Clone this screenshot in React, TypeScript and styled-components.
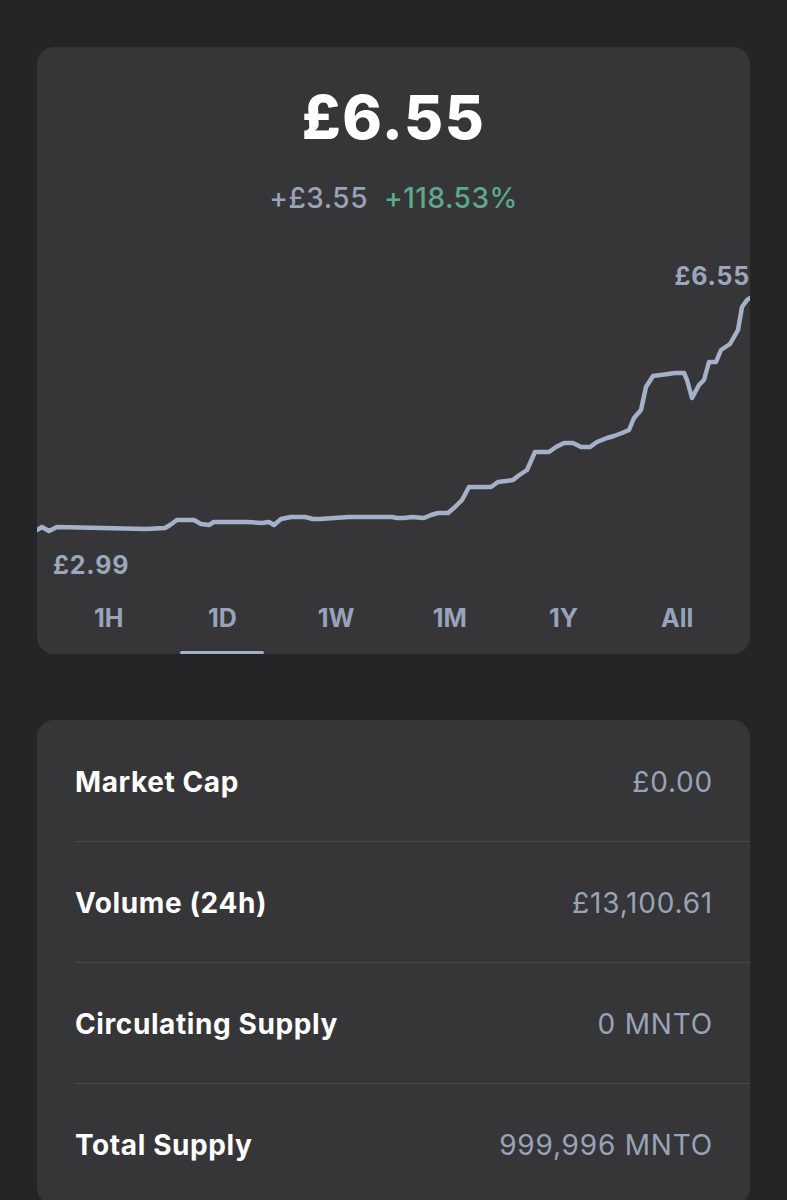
import React from "react";
import styled, { createGlobalStyle } from "styled-components";

const Global = createGlobalStyle`
  html, body { margin: 0; padding: 0; background: #252527; }
  body { font-family: Inter, "Noto Sans", "Liberation Sans", sans-serif; -webkit-font-smoothing: antialiased; }
  * { box-sizing: border-box; }
`;

const Page = styled.div`
  display: flex;
  flex-direction: column;
  gap: 66px;
  padding: 47px 37px 0;
  min-height: 1200px;
  background: #252527;
`;

const Card = styled.section`
  background: #363638;
  border-radius: 17px;
  overflow: hidden;
  display: flex;
  flex-direction: column;
`;

const PriceCard = styled(Card)`
  padding-top: 38px;
`;

const Price = styled.div`
  text-align: center;
  color: #ffffff;
  font-size: 60px;
  line-height: 64px;
  font-weight: 800;
  letter-spacing: 1.5px;
`;

const ChangeRow = styled.div`
  margin-top: 33px;
  display: flex;
  justify-content: center;
  gap: 16px;
  font-size: 28px;
  line-height: 32px;
  font-weight: 500;
  letter-spacing: 0.5px;
`;

const Change = styled.span<{ $tone: "muted" | "up" }>`
  color: ${(p) => (p.$tone === "up" ? "#5caa8c" : "#97a3bb")};
`;

const ChartLabel = styled.div<{ $align: "left" | "right" }>`
  color: #9ca7bd;
  font-size: 25px;
  line-height: 28px;
  font-weight: 700;
  letter-spacing: 0.8px;
  text-align: ${(p) => p.$align};
  padding: ${(p) => (p.$align === "right" ? "0 0 0 0" : "0 0 0 16px")};
`;

const HighLabel = styled(ChartLabel)`
  margin-top: 48px;
`;

const LowLabel = styled(ChartLabel)`
  margin-top: 11px;
`;

const ChartSvg = styled.svg`
  display: block;
  width: 713px;
  height: 250px;
`;

const Tabs = styled.div`
  display: grid;
  grid-template-columns: repeat(6, 1fr);
  padding: 0 16px 0 15px;
`;

const Tab = styled.div<{ $active?: boolean }>`
  position: relative;
  display: flex;
  justify-content: center;
  padding: 25px 0 22px;
  color: #97a3bb;
  font-size: 25px;
  line-height: 28px;
  font-weight: 700;
  &::after {
    content: "";
    position: absolute;
    left: 50%;
    bottom: 0;
    width: 84px;
    height: 3px;
    margin-left: -42px;
    border-radius: 2px;
    background: ${(p) => (p.$active ? "#a3b0c7" : "transparent")};
  }
`;

const StatsCard = styled(Card)`
  padding-top: 1px;
`;

const StatRow = styled.div`
  margin-left: 38px;
  padding-right: 37px;
  height: 121px;
  padding-top: 2px;
  display: flex;
  align-items: center;
  justify-content: space-between;
  border-bottom: 1px solid #4a4a4d;
`;

const StatLabel = styled.span`
  color: #ffffff;
  font-size: 28px;
  font-weight: 700;
  line-height: 34px;
  letter-spacing: 0.6px;
`;

const StatValue = styled.span`
  color: #98a3b9;
  font-size: 28px;
  font-weight: 400;
  line-height: 34px;
  letter-spacing: 0.8px;
`;

const raw: [number, number][] = [
  [37, 530], [42, 527], [49, 531], [57, 527], [102, 528], [146, 529], [165, 528],
  [170, 525], [177, 520], [194, 520], [201, 524], [209, 525], [214, 522], [247, 522],
  [262, 523], [269, 522], [274, 525], [281, 519], [291, 517], [305, 517], [313, 519],
  [320, 519], [349, 517], [392, 517], [397, 518], [404, 518], [412, 517], [424, 518],
  [431, 515], [438, 513], [448, 513], [455, 507], [462, 500], [469, 487], [491, 487],
  [498, 482], [513, 480], [518, 476], [527, 470], [535, 452], [549, 452], [556, 447],
  [564, 443], [573, 443], [581, 447], [590, 447], [597, 442], [607, 438], [614, 436],
  [622, 433], [629, 430], [634, 418], [641, 410], [646, 387], [653, 376], [668, 374],
  [675, 373], [684, 373], [687, 380], [692, 398], [699, 385], [704, 380], [709, 362],
  [716, 362], [721, 350], [730, 344], [738, 330], [742, 307], [747, 300], [750, 298],
];

const linePath = raw
  .map(([x, y], i) => `${i === 0 ? "M" : "L"}${x - 37} ${y - 290}`)
  .join(" ");

const stats = [
  { label: "Market Cap", value: "£0.00" },
  { label: "Volume (24h)", value: "£13,100.61" },
  { label: "Circulating Supply", value: "0 MNTO" },
  { label: "Total Supply", value: "999,996 MNTO" },
];

const ranges = ["1H", "1D", "1W", "1M", "1Y", "All"];

export default function App() {
  return (
    <>
      <Global />
      <Page>
        <PriceCard>
          <Price>£6.55</Price>
          <ChangeRow>
            <Change $tone="muted">+£3.55</Change>
            <Change $tone="up">+118.53%</Change>
          </ChangeRow>
          <HighLabel $align="right">£6.55</HighLabel>
          <ChartSvg viewBox="0 0 713 250">
            <path
              d={linePath}
              fill="none"
              stroke="#a4b1c8"
              strokeWidth={4.5}
              strokeLinejoin="round"
              strokeLinecap="round"
            />
          </ChartSvg>
          <LowLabel $align="left">£2.99</LowLabel>
          <Tabs>
            {ranges.map((r) => (
              <Tab key={r} $active={r === "1D"}>
                {r}
              </Tab>
            ))}
          </Tabs>
        </PriceCard>
        <StatsCard>
          {stats.map((s) => (
            <StatRow key={s.label}>
              <StatLabel>{s.label}</StatLabel>
              <StatValue>{s.value}</StatValue>
            </StatRow>
          ))}
        </StatsCard>
      </Page>
    </>
  );
}
